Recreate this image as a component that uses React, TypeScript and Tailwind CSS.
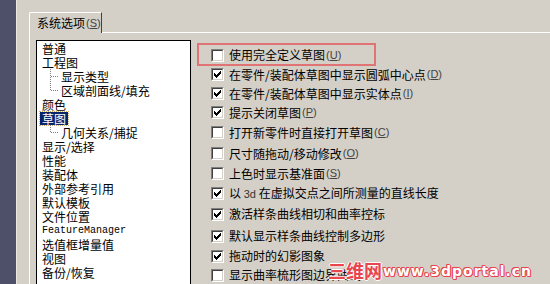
const cjk = "font-['Noto_Sans_CJK_SC','Noto_Sans',sans-serif]";

type TreeItem = { label: string; child?: boolean; last?: boolean; selected?: boolean; mono?: boolean };

const tree: TreeItem[] = [
  { label: "普通" },
  { label: "工程图" },
  { label: "显示类型", child: true },
  { label: "区域剖面线/填充", child: true, last: true },
  { label: "颜色" },
  { label: "草图", selected: true },
  { label: "几何关系/捕捉", child: true, last: true },
  { label: "显示/选择" },
  { label: "性能" },
  { label: "装配体" },
  { label: "外部参考引用" },
  { label: "默认模板" },
  { label: "文件位置" },
  { label: "FeatureManager", mono: true },
  { label: "选值框增量值" },
  { label: "视图" },
  { label: "备份/恢复" },
];

type Opt = { label: string; key?: string; on: boolean; h: string };

const opts: Opt[] = [
  { label: "使用完全定义草图", key: "U", on: false, h: "h-[20px]" },
  { label: "在零件/装配体草图中显示圆弧中心点", key: "D", on: true, h: "h-[19px]" },
  { label: "在零件/装配体草图中显示实体点", key: "I", on: true, h: "h-[19px]" },
  { label: "提示关闭草图", key: "P", on: true, h: "h-[19px]" },
  { label: "打开新零件时直接打开草图", key: "C", on: false, h: "h-[21px]" },
  { label: "尺寸随拖动/移动修改", key: "O", on: false, h: "h-[21px]" },
  { label: "上色时显示基准面", key: "S", on: false, h: "h-[19px]" },
  { label: "3d", on: true, h: "h-[20px]" },
  { label: "激活样条曲线相切和曲率控标", on: true, h: "h-[22px]" },
  { label: "默认显示样条曲线控制多边形", on: true, h: "h-[22px]" },
  { label: "拖动时的幻影图象", on: true, h: "h-[18px]" },
  { label: "显示曲率梳形图边界曲线", on: false, h: "h-[20px]" },
];

// classic 7x7 check glyph
const checkPx = [
  [6, 0], [5, 1], [6, 1], [0, 2], [4, 2], [5, 2], [6, 2],
  [0, 3], [1, 3], [3, 3], [4, 3], [5, 3], [0, 4], [1, 4], [2, 4], [3, 4], [4, 4],
  [1, 5], [2, 5], [3, 5], [2, 6],
];

function CheckBox({ on }: { on: boolean }) {
  return (
    <div className="w-[13px] h-[13px] shrink-0 border border-t-[#808080] border-l-[#808080] border-b-white border-r-white">
      <div className="w-full h-full bg-white border border-t-[#404040] border-l-[#404040] border-b-[#d4d0c8] border-r-[#d4d0c8] flex items-center justify-center">
        {on && (
          <svg width="7" height="7" viewBox="0 0 7 7" shapeRendering="crispEdges">
            {checkPx.map(([x, y]) => (
              <rect key={`${x}-${y}`} x={x} y={y} width="1" height="1" fill="#000" />
            ))}
          </svg>
        )}
      </div>
    </div>
  );
}

function Key({ k }: { k: string }) {
  return (
    <span className="font-['Liberation_Sans',sans-serif] text-[11px] text-[#444] ml-[1px]">
      (<span className="underline">{k}</span>)
    </span>
  );
}

function TreeLines({ last }: { last?: boolean }) {
  return (
    <svg width="9" height="14" viewBox="0 0 9 14" className="shrink-0" shapeRendering="crispEdges">
      <line x1="0.5" y1="0" x2="0.5" y2={last ? 7 : 14} stroke="#808080" strokeDasharray="1 1" />
      <line x1="1" y1="7.5" x2="9" y2="7.5" stroke="#808080" strokeDasharray="1 1" />
    </svg>
  );
}

export default function App() {
  return (
    <div className={`relative w-[550px] h-[284px] overflow-hidden flex bg-[#d4d0c8] ${cjk}`}>
      <div className="w-[16px] h-full bg-[#4e5069] shrink-0" />
      <div className="flex-1 flex flex-col border-l border-[#ebe8e2] pl-[1px]">
        {/* title bar, mostly scrolled off */}
        <div className="h-[6px] bg-[#0a246a] overflow-hidden pl-[2px]">
          <div className="-mt-[10px] text-[12px] leading-[16px] font-bold text-white whitespace-nowrap">
            系统选项(S) - 草图
          </div>
        </div>

        <div className="pt-[12px] pl-[11px] flex-1 flex flex-col">
          <div className="relative z-10 w-[73px] h-[21px] -mb-[1px] bg-[#d4d0c8] border-l border-t border-white rounded-tl-[2px] border-r border-r-[#404040] flex items-center pl-[7px] text-[12px] text-black">
            <span>系统选项</span>
            <Key k="S" />
          </div>
          <div className="flex-1 border-t border-l border-white flex">
            <div className="ml-[6px] mt-[7px] w-[155px] bg-white border border-black flex flex-col text-[12px] text-black">
              {tree.map((t) => (
                <div key={t.label} className={`h-[14px] flex items-center ${t.child ? "pl-[13px]" : "pl-[3px]"}`}>
                  {t.child && <TreeLines last={t.last} />}
                  <span
                    className={`leading-[13px] whitespace-nowrap px-[2px] ${
                      t.selected ? "bg-[#0a246a] text-white outline-1 outline-dotted outline-[#c8b070]" : ""
                    } ${t.mono ? "font-['Liberation_Mono',monospace] text-[10px]" : ""}`}
                  >
                    {t.label}
                  </span>
                </div>
              ))}
            </div>

            <div className="pl-[20px] pt-[12px] flex flex-col text-[12px] text-black">
              {opts.map((o) => (
                <div key={o.label} className={`${o.h} flex items-center gap-[5px] whitespace-nowrap`}>
                  <CheckBox on={o.on} />
                  {o.label === "3d" ? (
                    <span>
                      以 <span className="font-['Liberation_Sans',sans-serif] text-[11px] text-[#333]">3d</span> 在虚拟交点之间所测量的直线长度
                    </span>
                  ) : (
                    <span className="flex items-center">
                      {o.label}
                      {o.key && <Key k={o.key} />}
                    </span>
                  )}
                </div>
              ))}
            </div>
          </div>
        </div>
      </div>

      {/* red annotation box */}
      <div className="absolute left-[197px] top-[43px] w-[179px] h-[23px] border-2 border-[#e07474]" />

      {/* watermark */}
      <div className="absolute left-[328px] top-[260px] flex items-end whitespace-nowrap">
        <span className="text-[18px] leading-[20px] font-bold text-[#e8454f] [text-shadow:1px_0_#fff,-1px_0_#fff,0_1px_#fff,0_-1px_#fff]">
          三维网
        </span>
        <span className="ml-[1px] font-['DejaVu_Sans',sans-serif] font-bold text-[14px] leading-[17px] tracking-[1px] text-white [text-shadow:1px_0_#e8454f,-1px_0_#e8454f,0_1px_#e8454f,0_-1px_#e8454f,1px_1px_#e8454f,-1px_-1px_#e8454f]">
          www.3dportal.cn
        </span>
      </div>
    </div>
  );
}
